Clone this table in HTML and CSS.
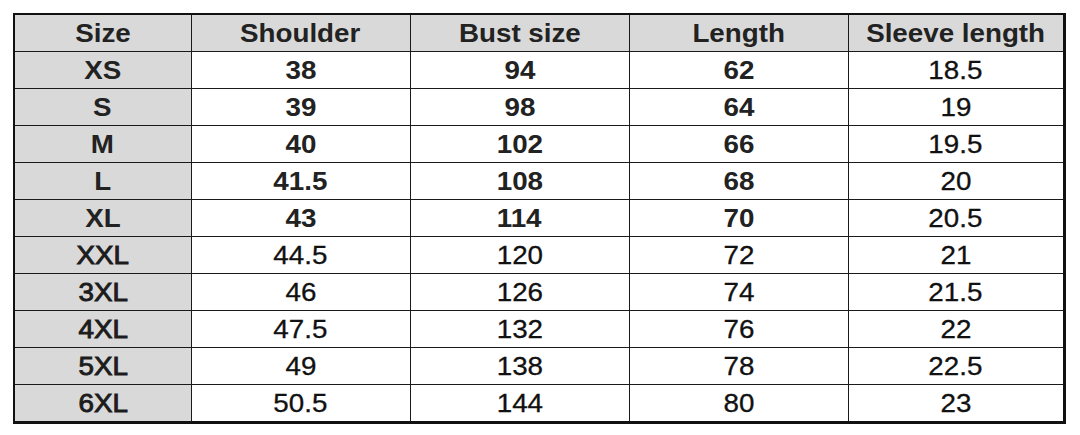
FILE: index.html
```html
<!DOCTYPE html>
<html>
<head>
<meta charset="utf-8">
<link rel="stylesheet" href="styles.css">
</head>
<body>
<table class="chart">
  <colgroup>
    <col class="c1"><col class="c2"><col class="c2"><col class="c2"><col class="c5">
  </colgroup>
  <tr class="head"><th><span>Size</span></th><th><span>Shoulder</span></th><th><span>Bust size</span></th><th><span>Length</span></th><th><span>Sleeve length</span></th></tr>
  <tr class="bold"><td class="size"><span>XS</span></td><td><span>38</span></td><td><span>94</span></td><td><span>62</span></td><td class="sleeve"><span>18.5</span></td></tr>
  <tr class="bold"><td class="size"><span>S</span></td><td><span>39</span></td><td><span>98</span></td><td><span>64</span></td><td class="sleeve"><span>19</span></td></tr>
  <tr class="bold"><td class="size"><span>M</span></td><td><span>40</span></td><td><span>102</span></td><td><span>66</span></td><td class="sleeve"><span>19.5</span></td></tr>
  <tr class="bold"><td class="size"><span>L</span></td><td><span>41.5</span></td><td><span>108</span></td><td><span>68</span></td><td class="sleeve"><span>20</span></td></tr>
  <tr class="bold"><td class="size"><span>XL</span></td><td><span>43</span></td><td><span>114</span></td><td><span>70</span></td><td class="sleeve"><span>20.5</span></td></tr>
  <tr><td class="size"><span>XXL</span></td><td><span>44.5</span></td><td><span>120</span></td><td><span>72</span></td><td class="sleeve"><span>21</span></td></tr>
  <tr><td class="size"><span>3XL</span></td><td><span>46</span></td><td><span>126</span></td><td><span>74</span></td><td class="sleeve"><span>21.5</span></td></tr>
  <tr><td class="size"><span>4XL</span></td><td><span>47.5</span></td><td><span>132</span></td><td><span>76</span></td><td class="sleeve"><span>22</span></td></tr>
  <tr><td class="size"><span>5XL</span></td><td><span>49</span></td><td><span>138</span></td><td><span>78</span></td><td class="sleeve"><span>22.5</span></td></tr>
  <tr><td class="size"><span>6XL</span></td><td><span>50.5</span></td><td><span>144</span></td><td><span>80</span></td><td class="sleeve"><span>23</span></td></tr>
</table>
</body>
</html>
```

FILE: styles.css
```css
html, body {
  margin: 0;
  padding: 0;
  background: #ffffff;
}
body {
  padding: 13px 0 0 13px;
  font-family: "Liberation Sans", Arial, sans-serif;
  color: #111;
}
.chart {
  border-collapse: collapse;
  table-layout: fixed;
  width: 1053px;
  border-top: 2px solid #111;
  border-left: 2px solid #111;
  border-right: 3px solid #111;
  border-bottom: 3px solid #111;
}
.c1 { width: 177px; }
.c2 { width: 219px; }
.chart th,
.chart td {
  border: 1px solid #1a1a1a;
  height: 36px;
  padding: 0;
  text-align: center;
  vertical-align: middle;
  font-size: 25px;
  line-height: 36px;
  font-weight: normal;
  -webkit-text-stroke: 0.3px #111;
}
.chart span {
  display: inline-block;
  transform: scaleX(1.11);
}
.head th {
  background: #d9d9d9;
  font-weight: bold;
  color: #222;
  -webkit-text-stroke: 0;
}
.chart td.size {
  background: #d9d9d9;
  color: #1c1c1c;
  -webkit-text-stroke: 0.9px #1c1c1c;
}
.chart .bold td {
  font-weight: bold;
  color: #222;
  -webkit-text-stroke: 0;
}
.chart .bold td.sleeve {
  font-weight: normal;
  color: #111;
  -webkit-text-stroke: 0.3px #111;
}
```
